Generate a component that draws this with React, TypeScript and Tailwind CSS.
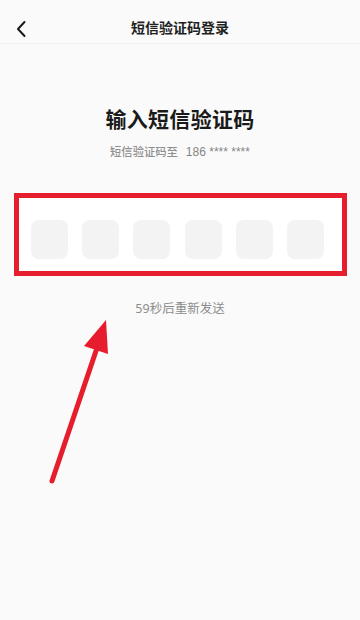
import React from "react";

const font = '"Noto Sans", "Noto Sans CJK SC", sans-serif';

export default function App() {
  const digits = [0, 1, 2, 3, 4, 5];

  return (
    <div className="relative min-h-[620px] w-[360px] bg-[#fafafa] overflow-hidden" style={{ fontFamily: font }}>
      {/* header */}
      <div className="relative h-[44px] flex items-center justify-center border-b border-[#f0f0f0]">
        <button className="absolute left-[12px] top-[19px] w-[18px] h-[20px] flex items-center justify-center">
          <svg width="12" height="18" viewBox="0 0 12 18" fill="none">
            <path d="M9.5 2 L3 9 L9.5 16" stroke="#1a1a1a" strokeWidth="2" strokeLinecap="round" strokeLinejoin="round" />
          </svg>
        </button>
        <div className="mt-[12px] text-[14px] font-semibold text-[#1f1f1f]">短信验证码登录</div>
      </div>

      <div className="flex flex-col items-center">
        <h1 className="mt-[60px] text-[21px] leading-[30px] font-bold text-[#1a1a1a] tracking-[0.3px]">输入短信验证码</h1>
        <div className="mt-[9px] flex items-center gap-[8px] text-[11.3px] leading-[18px] font-medium text-[#8f8f8f]">
          <span>短信验证码至</span>
          <span className="text-[12px] text-[#858585]" style={{ fontFamily: '"Liberation Sans", sans-serif' }}>
            186 **** ****
          </span>
        </div>

        {/* annotation frame around code inputs */}
        <div className="mt-[32px] w-[333px] h-[83px] border-[5px] border-[#e51d2c] bg-white pl-[12px] pr-[17px] pt-[22px]">
          <div className="flex justify-between">
            {digits.map((d) => (
              <div key={d} className="w-[37px] h-[39px] rounded-[8px] bg-[#f3f3f3]" />
            ))}
          </div>
        </div>

        <div className="mt-[24px] text-[12.5px] leading-[18px] text-[#8c8c8c]">59秒后重新发送</div>
      </div>

      {/* annotation arrow */}
      <svg className="absolute left-0 top-0 pointer-events-none" width="360" height="620" viewBox="0 0 360 620">
        <line x1="52" y1="481" x2="97" y2="348" stroke="#e51d2c" strokeWidth="5" strokeLinecap="round" />
        <polygon points="106,320 84,346 108,354" fill="#e51d2c" />
      </svg>
    </div>
  );
}
